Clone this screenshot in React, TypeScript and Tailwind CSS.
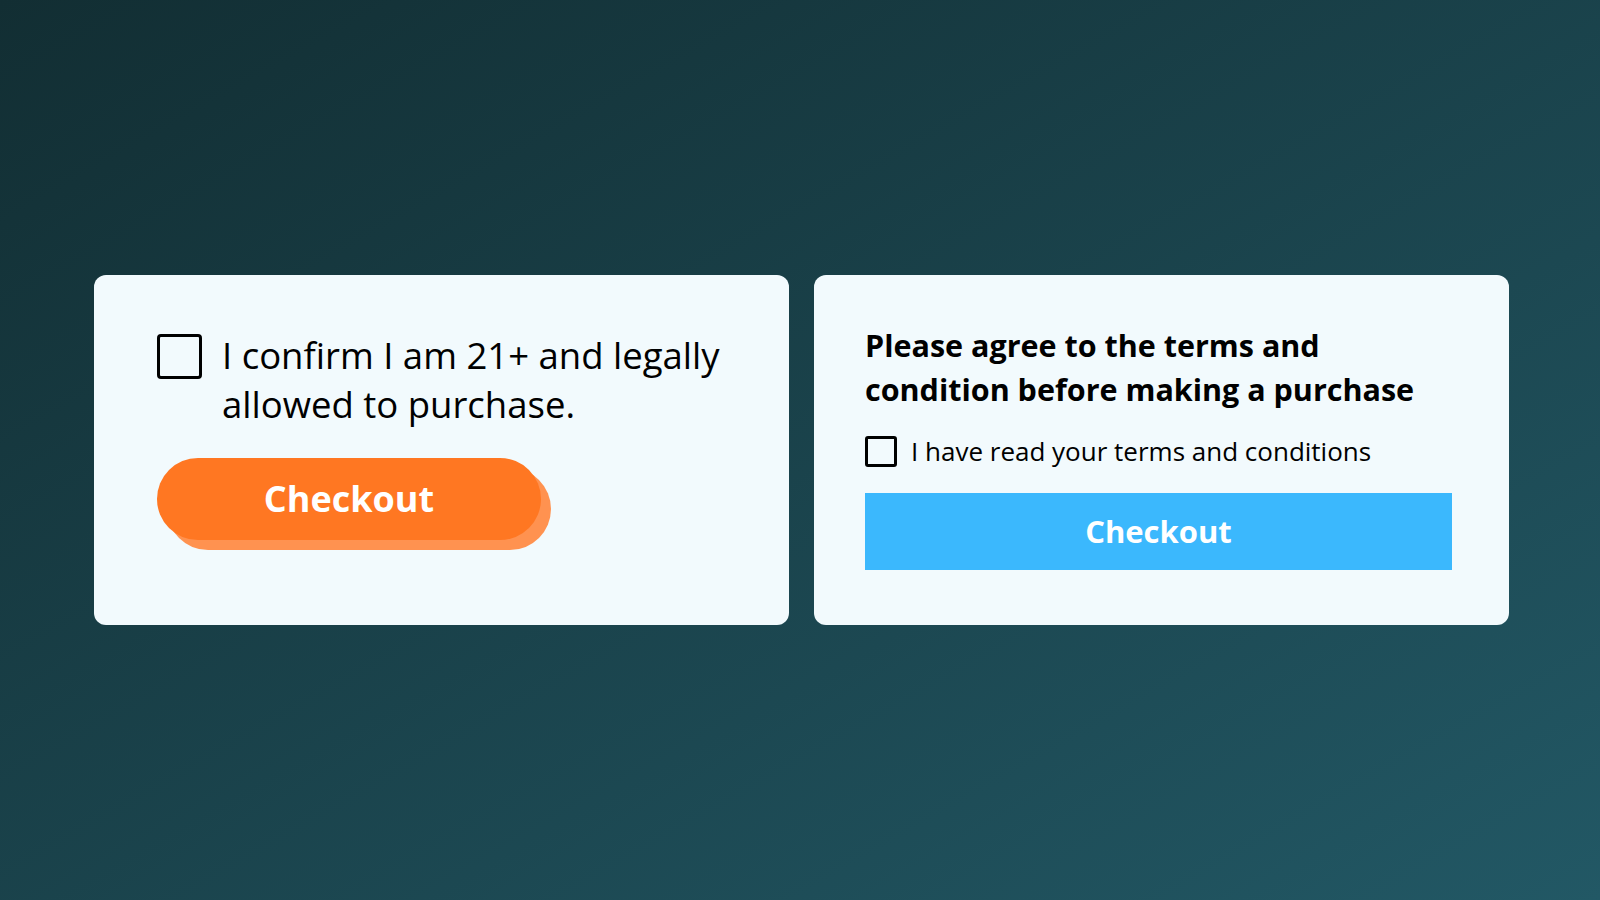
export default function App() {
  return (
    <div
      className="w-full h-screen flex items-center justify-center gap-[25px] pl-[3px] bg-gradient-to-br from-[#122e33] to-[#225865]"
      style={{ fontFamily: '"Open Sans", "Noto Sans", sans-serif' }}
    >
      {/* Age confirmation card */}
      <div className="w-[695px] h-[350px] bg-[#f2fafd] rounded-xl pl-[63px] pt-[58px]">
        <label className="flex items-start gap-[20px]">
          <span className="mt-[1px] w-[45px] h-[45px] border-[3px] border-black rounded-[4px] shrink-0" />
          <span className="text-[36.5px] leading-[49px] text-black -mt-[2px]">
            I confirm I am 21+ and legally allowed to purchase.
          </span>
        </label>
        <button className="mt-[29px] relative w-[394px] h-[92px]">
          <span className="absolute left-[10px] top-[10px] right-0 bottom-0 rounded-full bg-[#ff9250]" />
          <span className="absolute left-0 top-0 right-[10px] bottom-[10px] rounded-full bg-[#ff7722] flex items-center justify-center text-white font-bold text-[36px]">
            Checkout
          </span>
        </button>
      </div>

      {/* Terms agreement card */}
      <div className="w-[695px] h-[350px] bg-[#f2fafd] rounded-xl pl-[51px] pr-[57px] pt-[48px]">
        <h2 className="text-[30.5px] leading-[44px] font-bold text-black">
          Please agree to the terms and condition before making a purchase
        </h2>
        <label className="mt-[21px] flex items-center gap-[14px]">
          <span className="w-[32px] h-[31px] border-[3px] border-black rounded-[3px] shrink-0" />
          <span className="text-[26px] text-black">I have read your terms and conditions</span>
        </label>
        <button className="mt-[22px] w-full h-[77px] bg-[#3bb8fd] text-white font-bold text-[31px]">
          Checkout
        </button>
      </div>
    </div>
  );
}
